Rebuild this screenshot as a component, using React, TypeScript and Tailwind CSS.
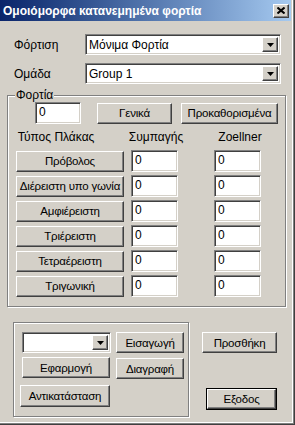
import React from "react";

const font = "font-['Liberation_Sans',Arial,sans-serif]";

const raised =
  "flex items-center justify-center bg-[#d4d0c8] border border-t-white border-l-white border-r-[#404040] border-b-[#404040] shadow-[inset_-1px_-1px_0_#808080] text-[11.5px] leading-[14px] tracking-[-0.2px] text-black whitespace-nowrap";

const sunken =
  "bg-white border border-t-[#808080] border-l-[#808080] border-r-white border-b-white shadow-[inset_1px_1px_0_#404040,inset_-1px_-1px_0_#d4d0c8]";

const etched = "border border-[#808080] shadow-[inset_1px_1px_0_#fff,1px_1px_0_#fff]";

function Edit({ className }: { className: string }) {
  return (
    <input
      readOnly
      value="0"
      className={`${sunken} ${className} h-[22px] pl-[3px] pb-[3px] text-[12px] text-black outline-none`}
    />
  );
}

function Arrow() {
  return (
    <div className={`${raised} w-[16px] shrink-0`}>
      <svg width="7" height="4" viewBox="0 0 7 4">
        <path d="M0 0h7L3.5 4z" fill="#000" />
      </svg>
    </div>
  );
}

function Combo({ value, className }: { value: string; className: string }) {
  return (
    <div className={`${sunken} ${className} flex p-[2px]`}>
      <div className="flex-1 pl-[1px] text-[12px] leading-[16px] text-black">{value}</div>
      <Arrow />
    </div>
  );
}

const rows = ["Πρόβολος", "Διέρειστη υπο γωνία", "Αμφιέρειστη", "Τριέρειστη", "Τετραέρειστη", "Τριγωνική"];

export default function App() {
  return (
    <div
      className={`${font} w-[295px] h-[425px] bg-[#d4d0c8] text-black text-[12px] shadow-[inset_-1px_-1px_0_#404040,inset_-2px_-2px_0_#808080,inset_-3px_-3px_0_#fff] overflow-hidden`}
    >
      <div className="h-[21px] w-[291px] flex items-center justify-between pl-[3px] pr-[2px] bg-gradient-to-r from-[#0a246a] to-[#a6caf0]">
        <span className="text-white font-bold text-[12px] leading-[14px]">Ομοιόμορφα κατανεμημένα φορτία</span>
        <div className={`${raised} w-[16px] h-[14px]`}>
          <svg width="8" height="7" viewBox="0 0 8 7">
            <path d="M0.5 0.5L7.5 6.5M7.5 0.5L0.5 6.5" stroke="#000" strokeWidth="2" />
          </svg>
        </div>
      </div>

      <div className="mt-[13px] flex items-center">
        <span className="w-[85px] pl-[14px]">Φόρτιση</span>
        <Combo value="Μόνιμα Φορτία" className="w-[196px] h-[21px]" />
      </div>
      <div className="mt-[8px] flex items-center">
        <span className="w-[85px] pl-[14px]">Ομάδα</span>
        <Combo value="Group 1" className="w-[196px] h-[21px]" />
      </div>

      <fieldset className={`${etched} mt-[5px] ml-[7px] w-[279px] pb-[9px]`}>
        <legend className="ml-[7px] px-[1px] bg-[#d4d0c8] leading-[13px]">Φορτία</legend>
        <div className="flex items-center">
          <Edit className="ml-[27px] w-[46px]" />
          <button className={`${raised} ml-[16px] w-[75px] h-[21px]`}>Γενικά</button>
          <button className={`${raised} ml-[9px] w-[97px] h-[21px]`}>Προκαθορισμένα</button>
        </div>
        <div className="mt-[7px] flex h-[13px] leading-[13px]">
          <span className="w-[96px] text-center">Τύπος Πλάκας</span>
          <span className="w-[104px] text-center">Συμπαγής</span>
          <span className="w-[64px] text-center">Zoellner</span>
        </div>
        <div className="mt-[6px] flex flex-col gap-[3px]">
          {rows.map((r) => (
            <div key={r} className="flex items-center h-[22px]">
              <button className={`${raised} ml-[8px] w-[108px] h-[21px]`}>{r}</button>
              <Edit className="ml-[7px] w-[47px]" />
              <Edit className="ml-[36px] w-[47px]" />
            </div>
          ))}
        </div>
      </fieldset>

      <div className="mt-[15px] flex">
        <div className={`${etched} ml-[13px] w-[176px] h-[95px] flex`}>
          <div className="flex flex-col">
            <Combo value="" className="ml-[8px] mt-[9px] w-[89px] h-[21px]" />
            <button className={`${raised} ml-[8px] mt-[4px] w-[88px] h-[21px]`}>Εφαρμογή</button>
            <button className={`${raised} ml-[6px] mt-[7px] w-[90px] h-[22px]`}>Αντικατάσταση</button>
          </div>
          <div className="flex flex-col">
            <button className={`${raised} ml-[5px] mt-[9px] w-[68px] h-[21px]`}>Εισαγωγή</button>
            <button className={`${raised} ml-[5px] mt-[5px] w-[68px] h-[21px]`}>Διαγραφή</button>
          </div>
        </div>
        <div className="flex flex-col">
          <button className={`${raised} ml-[13px] mt-[10px] w-[75px] h-[21px]`}>Προσθήκη</button>
          <div className="ml-[17px] mt-[35px] w-[71px] h-[22px] border border-black flex">
            <button className={`${raised} flex-1`}>Εξοδος</button>
          </div>
        </div>
      </div>
    </div>
  );
}
